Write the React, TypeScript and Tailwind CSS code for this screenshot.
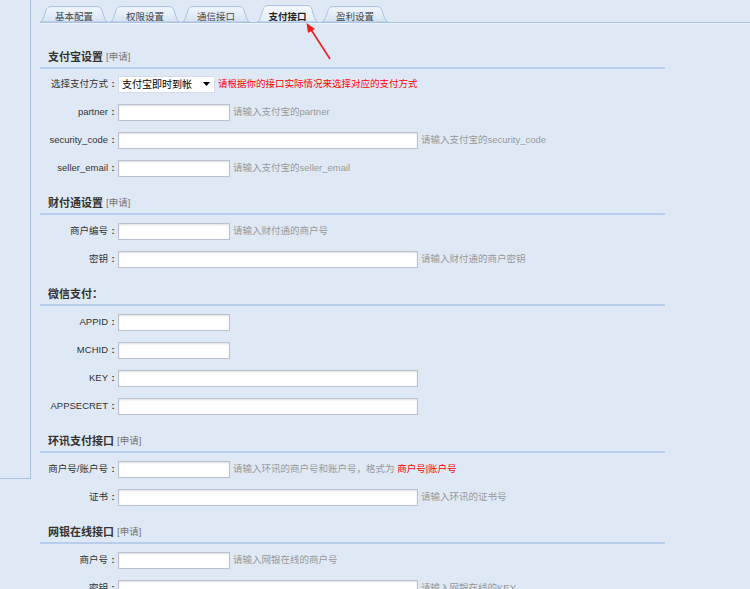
import React from "react";

const tabs = [
  { label: "基本配置", w: 68, cls: "w-[68px] h-[16px]" },
  { label: "权限设置", w: 70, cls: "w-[70px] h-[16px] ml-[2px]" },
  { label: "通信接口", w: 68, cls: "w-[68px] h-[16px] ml-[2px]" },
  { label: "支付接口", w: 61, cls: "w-[61px] h-[17px] ml-[7px]", active: true },
  { label: "盈利设置", w: 66, cls: "w-[66px] h-[16px] ml-[4px]" },
];

function Tab({ label, w, cls, active }: { label: string; w: number; cls: string; active?: boolean }) {
  const h = active ? 17 : 16;
  const d = `M0 ${h} C4 ${h} 5 3 8 1.5 Q9 0.6 11 0.6 L${w - 11} 0.6 Q${w - 9} 0.6 ${w - 8} 1.5 C${w - 5} 3 ${w - 4} ${h} ${w} ${h} Z`;
  const gid = active ? "tabActive" : "tabNormal";
  return (
    <div className={`relative flex items-end justify-center ${cls}`}>
      <svg className="absolute inset-0" width={w} height={h} viewBox={`0 0 ${w} ${h}`}>
        <defs>
          <linearGradient id={gid} x1="0" y1="0" x2="0" y2="1">
            <stop offset="0" stopColor={active ? "#f7faff" : "#f1f6fc"} />
            <stop offset="1" stopColor={active ? "#e3ecf8" : "#d6e3f3"} />
          </linearGradient>
        </defs>
        <path d={d} fill={`url(#${gid})`} stroke="#a9c2e2" strokeWidth="1" />
      </svg>
      <span
        className={`relative leading-[11px] text-[9.5px] ${active ? "font-bold text-[#222]" : "text-[#444]"}`}
      >
        {label}
      </span>
    </div>
  );
}

function Header({ title, apply }: { title: string; apply?: boolean }) {
  return (
    <div className="w-[625px]">
      <div className="h-[19px] flex items-center pl-[8px]">
        <span className="text-[11px] font-bold text-[#333]">{title}</span>
        {apply && <span className="ml-[3px] text-[9.5px] text-[#777]">[申请]</span>}
      </div>
      <div className="h-[2px] bg-[#b8cdea]" />
    </div>
  );
}

function Input({ long }: { long?: boolean }) {
  return (
    <input
      className={`${long ? "w-[300px]" : "w-[112px]"} h-[17px] bg-white border border-[#b9c1d3] shadow-[inset_0_1px_2px_rgba(0,0,0,0.12)] outline-none`}
    />
  );
}

function Row({ label, children }: { label: string; children: React.ReactNode }) {
  return (
    <div className="flex items-center h-[28px]">
      <div className="w-[78px] shrink-0 flex justify-end items-center text-[9.5px] text-[#333] whitespace-nowrap">
        <span>{label}</span>
        <span className="w-[10px] text-center font-bold">:</span>
      </div>
      {children}
    </div>
  );
}

function Hint({ children }: { children: React.ReactNode }) {
  return <span className="ml-[3px] text-[9.5px] text-[#999] whitespace-nowrap">{children}</span>;
}

export default function App() {
  return (
    <div
      className="w-[750px] h-[589px] overflow-hidden bg-[#dfe9f5] flex relative"
      style={{ fontFamily: '"Liberation Sans", "Noto Sans CJK SC", sans-serif' }}
    >
      <div className="w-[31px] h-[479px] shrink-0 border-r border-b border-[#a9c3e6]" />

      <div className="flex-1 pl-[9px]">
        <div className="h-[23px] flex items-end border-b border-[#a9c3e6] shadow-[0_1px_0_#eef4fb] pt-[4px]">
          {tabs.map((t) => (
            <Tab key={t.label} {...t} />
          ))}
        </div>

        <div className="pt-[25px]">
          <Header title="支付宝设置" apply />
          <div className="pt-[1px]">
            <Row label="选择支付方式">
              <div className="w-[97px] h-[17px] bg-white border border-[#d6dde9] flex items-center justify-between pl-[3px] pr-[4px]">
                <span className="text-[10px] leading-[15px] text-black">支付宝即时到帐</span>
                <svg width="7" height="4" viewBox="0 0 7 4">
                  <path d="M0 0 L7 0 L3.5 4 Z" fill="#000" />
                </svg>
              </div>
              <span className="ml-[3px] text-[9.5px] text-[#ff0000] whitespace-nowrap">
                请根据你的接口实际情况来选择对应的支付方式
              </span>
            </Row>
            <Row label="partner">
              <Input />
              <Hint>请输入支付宝的partner</Hint>
            </Row>
            <Row label="security_code">
              <Input long />
              <Hint>请输入支付宝的security_code</Hint>
            </Row>
            <Row label="seller_email">
              <Input />
              <Hint>请输入支付宝的seller_email</Hint>
            </Row>
          </div>
        </div>

        <div className="mt-[12px]">
          <Header title="财付通设置" apply />
          <div className="pt-[2px]">
            <Row label="商户编号">
              <Input />
              <Hint>请输入财付通的商户号</Hint>
            </Row>
            <Row label="密钥">
              <Input long />
              <Hint>请输入财付通的商户密钥</Hint>
            </Row>
          </div>
        </div>

        <div className="mt-[12px]">
          <Header title="微信支付：" />
          <div className="pt-[2px]">
            <Row label="APPID">
              <Input />
            </Row>
            <Row label="MCHID">
              <Input />
            </Row>
            <Row label="KEY">
              <Input long />
            </Row>
            <Row label="APPSECRET">
              <Input long />
            </Row>
          </div>
        </div>

        <div className="mt-[12px]">
          <Header title="环讯支付接口" apply />
          <div className="pt-[2px]">
            <Row label="商户号/账户号">
              <Input />
              <Hint>
                请输入环讯的商户号和账户号，格式为 <span className="text-[#ff0000]">商户号|账户号</span>
              </Hint>
            </Row>
            <Row label="证书">
              <Input long />
              <Hint>请输入环讯的证书号</Hint>
            </Row>
          </div>
        </div>

        <div className="mt-[12px]">
          <Header title="网银在线接口" apply />
          <div className="pt-[2px]">
            <Row label="商户号">
              <Input />
              <Hint>请输入网银在线的商户号</Hint>
            </Row>
            <Row label="密钥">
              <Input long />
              <Hint>请输入网银在线的KEY</Hint>
            </Row>
          </div>
        </div>
      </div>

      <svg className="absolute left-[300px] top-[18px]" width="40" height="46" viewBox="0 0 40 46">
        <line x1="30" y1="41" x2="10" y2="10" stroke="#ee1c1c" strokeWidth="1.6" />
        <path d="M6.5 5 L15 11 L8 15 Z" fill="#ee1c1c" />
      </svg>
    </div>
  );
}
